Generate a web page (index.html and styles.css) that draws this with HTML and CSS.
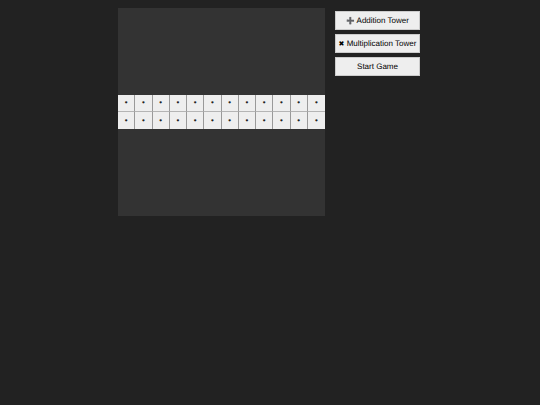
FILE: index.html
```html
<!DOCTYPE html>
<html lang="en">
<head>
    <meta charset="UTF-8">
    <meta name="viewport" content="width=device-width, initial-scale=1.0">
    <title>Math Tower Defense</title>
    <link rel="stylesheet" href="styles.css">
</head>
<body>
    <div class="game">
        <div id="board" class="board"></div>
        <div class="controls">
            <button type="button"><span class="icon plus">➕</span> Addition Tower</button>
            <button type="button"><span class="icon">✖</span> Multiplication Tower</button>
            <button type="button">Start Game</button>
        </div>
    </div>

    <script src="script.js"></script>
</body>
</html>
```

FILE: styles.css
```css
body {
    margin: 0;
    padding: 8px;
    background-color: #222;
    font-family: "Liberation Sans", Arial, sans-serif;
    text-rendering: geometricPrecision;
}
.game {
    display: flex;
    justify-content: center;
    align-items: flex-start;
    gap: 8px;
}
.board {
    display: grid;
    grid-template-columns: repeat(12, 1fr);
    grid-template-rows: repeat(12, 1fr);
    width: 207px;
    height: 208px;
    background-color: #333;
}
.path {
    display: flex;
    justify-content: center;
    align-items: center;
    min-width: 0;
    min-height: 0;
    border-right: 1px solid #999;
    background-color: #eee;
    color: #222;
    font-size: 8px;
    line-height: 8px;
}
.path.first {
    border-bottom: 1px solid #b4b4b4;
}
.path.last {
    border-right: none;
}
.controls {
    display: flex;
    flex-direction: column;
    gap: 4px;
    padding: 3px 2px;
}
button {
    width: 85px;
    height: 19px;
    padding: 1px 0 0;
    border: 1px solid #ccc;
    background-color: #eee;
    color: #000;
    font-family: inherit;
    font-size: 8px;
    line-height: 8px;
    text-rendering: inherit;
    white-space: nowrap;
    cursor: pointer;
}
button:hover {
    background-color: #ddd;
}
.icon {
    font-family: "DejaVu Sans", sans-serif;
    font-size: 7px;
}
.plus {
    color: #555;
}
```

FILE: script.js
```js
const board = document.getElementById("board");
const size = 12;
const pathRows = [5, 6];

for (let row = 0; row < size; row++) {
    for (let col = 0; col < size; col++) {
        const cell = document.createElement("div");
        if (pathRows.includes(row)) {
            cell.className = "path";
            cell.textContent = "•";
            if (row === pathRows[0]) cell.classList.add("first");
            if (col === size - 1) cell.classList.add("last");
        }
        board.appendChild(cell);
    }
}
```
